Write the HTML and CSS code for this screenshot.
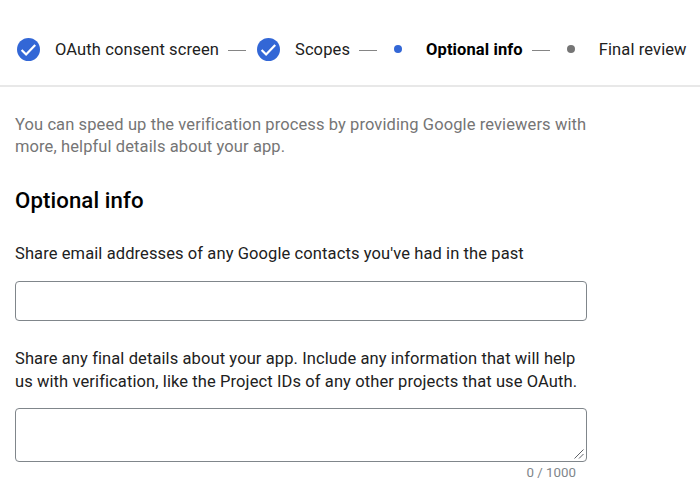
FILE: index.html
```html
<!DOCTYPE html>
<html lang="en">
<head>
    <meta charset="UTF-8">
    <meta name="viewport" content="width=device-width, initial-scale=1.0">
    <title>Optional info</title>
    <link rel="stylesheet" href="styles.css">
</head>
<body>
    <nav class="stepper">
        <div class="step done">
            <svg class="check" viewBox="0 0 24 24"><circle cx="12" cy="12" r="12"/><path d="M4.8 12.5l4.7 4.7 9.5-10"/></svg>
            <span>OAuth consent screen</span>
        </div>
        <span class="line"></span>
        <div class="step done">
            <svg class="check" viewBox="0 0 24 24"><circle cx="12" cy="12" r="12"/><path d="M4.8 12.5l4.7 4.7 9.5-10"/></svg>
            <span>Scopes</span>
        </div>
        <span class="line"></span>
        <div class="step current">
            <span class="dot"></span>
            <span>Optional info</span>
        </div>
        <span class="line"></span>
        <div class="step">
            <span class="dot"></span>
            <span>Final review</span>
        </div>
    </nav>

    <main class="content">
        <p class="intro">You can speed up the verification process by providing Google reviewers with more, helpful details about your app.</p>
        <h2>Optional info</h2>
        <form>
            <label for="contacts">Share email addresses of any Google contacts you've had in the past</label>
            <input type="text" id="contacts">
            <label for="details">Share any final details about your app. Include any information that will help us with verification, like the Project IDs of any other projects that use OAuth.</label>
            <div class="textarea-wrap">
                <textarea id="details"></textarea>
                <svg class="grip" viewBox="0 0 10 10"><path d="M0.5 9.5l9-9M5 9.5l4.5-4.5"/></svg>
            </div>
            <div class="counter">0 / 1000</div>
        </form>
    </main>
</body>
</html>
```
FILE: styles.css
```css
* {
    box-sizing: border-box;
    margin: 0;
    padding: 0;
}
body {
    font-family: Roboto, sans-serif;
    font-size: 16.5px;
    letter-spacing: 0.1px;
    line-height: 22px;
    color: #212121;
    background: white;
    overflow: hidden;
}
.stepper {
    display: flex;
    align-items: center;
    height: 87px;
    padding: 14px 0 0 17px;
    border-bottom: 2px solid #e8e8e8;
    letter-spacing: 0.11px;
    white-space: nowrap;
}
.step {
    display: flex;
    align-items: center;
}
.check {
    width: 23px;
    height: 23px;
    margin-right: 15px;
}
.check circle {
    fill: #3367d6;
}
.check path {
    fill: none;
    stroke: white;
    stroke-width: 2.3;
}
.line {
    width: 18px;
    height: 1px;
    margin: 1px 11px 0 9px;
    background: #858585;
}
.dot {
    width: 8px;
    height: 8px;
    margin: 0 24px 2px 6px;
    border-radius: 50%;
    background: #757575;
}
.current {
    font-weight: bold;
    color: black;
}
.current .dot {
    background: #3367d6;
}
.content {
    width: 590px;
    padding: 27px 0 0 15px;
}
.intro {
    color: #757575;
}
h2 {
    margin-top: 28px;
    font-size: 22.2px;
    font-weight: 500;
    line-height: 28px;
    color: black;
}
label {
    display: block;
    width: 566px;
    margin-top: 29px;
}
input,
textarea {
    display: block;
    width: 572px;
    padding: 8px;
    border: 1px solid #80868b;
    border-radius: 4px;
    font: inherit;
    outline: none;
}
input {
    height: 40px;
    margin-top: 16px;
}
input + label {
    margin-top: 27px;
    line-height: 22.5px;
}
.textarea-wrap {
    position: relative;
    width: 572px;
    margin-top: 15px;
}
textarea {
    height: 54px;
    resize: none;
}
.grip {
    position: absolute;
    right: 3px;
    bottom: 3px;
    width: 10px;
    height: 10px;
    fill: none;
    stroke: #5f6368;
    pointer-events: none;
}
.counter {
    padding: 3px 11px 0 0;
    width: 572px;
    font-size: 13.3px;
    letter-spacing: 0;
    line-height: 16px;
    text-align: right;
    color: #80868b;
}
```
